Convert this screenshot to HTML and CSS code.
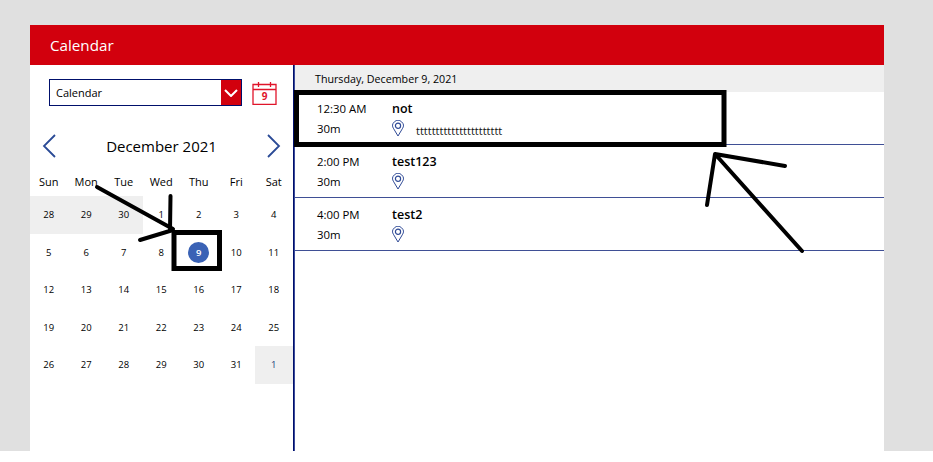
FILE: index.html
```html
<!DOCTYPE html>
<html lang="en">
<head>
    <meta charset="UTF-8">
    <meta name="viewport" content="width=device-width, initial-scale=1.0">
    <title>Calendar</title>
    <link rel="stylesheet" href="styles.css">
</head>
<body>
    <div class="stage">
        <div class="app">
            <header class="app-header">Calendar</header>
            <div class="app-body">
                <aside class="side">
                    <div class="picker">
                        <div class="select">
                            <span class="select-label">Calendar</span>
                            <span class="select-btn">
                                <svg width="14" height="8" viewBox="0 0 14 8"><path d="M1 1l6 6 6-6" fill="none" stroke="#fff" stroke-width="2"/></svg>
                            </span>
                        </div>
                        <div class="today-icon">
                            <svg class="today-frame" width="25" height="24" viewBox="0 0 25 24">
                                <path d="M1 3.500h23v20h-23zM1 8.500h23M6.500 1v5M18.500 1v5" fill="none" stroke="#e0142a" stroke-width="1.300"/>
                            </svg>
                            <span class="today-num">9</span>
                        </div>
                    </div>

                    <div class="month-nav">
                        <svg width="14" height="24" viewBox="0 0 14 24"><path d="M13 1L2 12l11 11" fill="none" stroke="#2a4a96" stroke-width="1.800"/></svg>
                        <span class="month-name">December 2021</span>
                        <svg width="14" height="24" viewBox="0 0 14 24"><path d="M1 1l11 11L1 23" fill="none" stroke="#2a4a96" stroke-width="1.800"/></svg>
                    </div>

                    <div class="weekdays">
                        <span>Sun</span><span>Mon</span><span>Tue</span><span>Wed</span><span>Thu</span><span>Fri</span><span>Sat</span>
                    </div>

                    <div class="days">
                        <span class="other">28</span><span class="other">29</span><span class="other">30</span><span>1</span><span>2</span><span>3</span><span>4</span>
                        <span>5</span><span>6</span><span>7</span><span>8</span><span><b class="selected">9</b></span><span>10</span><span>11</span>
                        <span>12</span><span>13</span><span>14</span><span>15</span><span>16</span><span>17</span><span>18</span>
                        <span>19</span><span>20</span><span>21</span><span>22</span><span>23</span><span>24</span><span>25</span>
                        <span>26</span><span>27</span><span>28</span><span>29</span><span>30</span><span>31</span><span class="other next">1</span>
                    </div>
                </aside>

                <main class="agenda">
                    <div class="agenda-date">Thursday, December 9, 2021</div>

                    <div class="event">
                        <div class="event-time">12:30 AM</div>
                        <div class="event-title">not</div>
                        <div class="event-time">30m</div>
                        <div class="event-place">
                            <svg class="pin" width="12" height="17" viewBox="0 0 12 17"><path d="M6 16L1.700 8.800A5.300 5.300 0 1 1 10.300 8.800z" fill="none" stroke="#2f4a96" stroke-width="1"/><circle cx="6" cy="5.800" r="2.600" fill="none" stroke="#2f4a96" stroke-width="1.200"/></svg>
                            <span class="event-location">tttttttttttttttttttttt</span>
                        </div>
                    </div>

                    <div class="event">
                        <div class="event-time">2:00 PM</div>
                        <div class="event-title">test123</div>
                        <div class="event-time">30m</div>
                        <div class="event-place">
                            <svg class="pin" width="12" height="17" viewBox="0 0 12 17"><path d="M6 16L1.700 8.800A5.300 5.300 0 1 1 10.300 8.800z" fill="none" stroke="#2f4a96" stroke-width="1"/><circle cx="6" cy="5.800" r="2.600" fill="none" stroke="#2f4a96" stroke-width="1.200"/></svg>
                        </div>
                    </div>

                    <div class="event">
                        <div class="event-time">4:00 PM</div>
                        <div class="event-title">test2</div>
                        <div class="event-time">30m</div>
                        <div class="event-place">
                            <svg class="pin" width="12" height="17" viewBox="0 0 12 17"><path d="M6 16L1.700 8.800A5.300 5.300 0 1 1 10.300 8.800z" fill="none" stroke="#2f4a96" stroke-width="1"/><circle cx="6" cy="5.800" r="2.600" fill="none" stroke="#2f4a96" stroke-width="1.200"/></svg>
                        </div>
                    </div>
                </main>
            </div>
        </div>
    </div>

    <!-- hand drawn marks on top of the app -->
    <svg class="marks" width="933" height="462" viewBox="0 0 933 462">
        <rect x="296.500" y="92.500" width="427.500" height="52" />
        <rect x="174" y="232.500" width="45.500" height="36" />
        <path d="M97 187L173 229M170.500 196L170 230M140 240L173 230" />
        <path d="M785 166L715 154M707 205L715 154L802 251" />
    </svg>
</body>
</html>
```

FILE: styles.css
```css
* { box-sizing: border-box; }
body { margin: 0; background: #fff; font-family: "Open Sans", "Noto Sans", sans-serif; color: #000; }

.stage { height: 451px; padding: 25px 49px 0 30px; background: #e0e0e0; }
.app { height: 426px; background: #fff; display: flex; flex-direction: column; }
.app-header { height: 40px; padding-left: 20px; background: #d2000d; color: #fff; font-size: 15.200px; line-height: 40px; }
.app-body { flex: 1; display: flex; }

.side { width: 264px; border-right: 1px solid #000f6b; }
.picker { display: flex; align-items: center; gap: 10px; padding: 14px 0 0 19px; }
.select { width: 193px; height: 27px; display: flex; border: 1px solid #000f6b; }
.select-label { flex: 1; padding-left: 6px; font-size: 11px; line-height: 25px; }
.select-btn { width: 20px; background: #d2000d; display: flex; align-items: center; justify-content: center; }
.today-icon { width: 25px; height: 24px; position: relative; }
.today-frame { display: block; }
.today-num { position: absolute; left: 0; right: 0; top: 9px; text-align: center; color: #e0142a; font-size: 10px; font-weight: 700; line-height: 13px; }

.month-nav { display: flex; align-items: center; justify-content: space-between; height: 24px; margin-top: 28px; padding: 0 12px 0 12px; }
.month-name { font-size: 15px; }

.weekdays { display: grid; grid-template-columns: repeat(7, 37.500px); height: 26px; margin-top: 12px; font-size: 11px; line-height: 24px; text-align: center; }
.days { display: grid; grid-template-columns: repeat(7, 37.500px); grid-auto-rows: 37.500px; font-size: 9.500px; text-align: center; }
.days span { display: flex; align-items: center; justify-content: center; }
.days .other { background: #efefef; }
.days .next { color: #1d3f7a; }
.selected { width: 21px; height: 21px; border-radius: 50%; background: #3a62b5; color: #fff; font-weight: 600; line-height: 21px; }

.agenda { flex: 1; border-left: 1px solid #3a4a9a; }
.agenda-date { height: 27px; padding-left: 20px; background: #efefef; font-size: 10.700px; line-height: 28px; }
.event { height: 53px; padding: 5px 0 0 22px; display: grid; grid-template-columns: 75px 1fr; grid-template-rows: 23px 16px; align-items: center; border-bottom: 1px solid #3f4f95; }
.event-time { font-size: 11.400px; }
.event-title { font-size: 12.500px; font-weight: 600; }
.event-place { display: flex; align-items: flex-end; gap: 12px; height: 17px; }
.pin { display: block; }
.event-location { font-size: 11px; line-height: 13px; color: #111; }

.marks { position: absolute; left: 0; top: 0; pointer-events: none; }
.marks rect { fill: none; stroke: #000; stroke-width: 5; }
.marks path { fill: none; stroke: #000; stroke-width: 4; stroke-linecap: round; stroke-linejoin: round; }
```
